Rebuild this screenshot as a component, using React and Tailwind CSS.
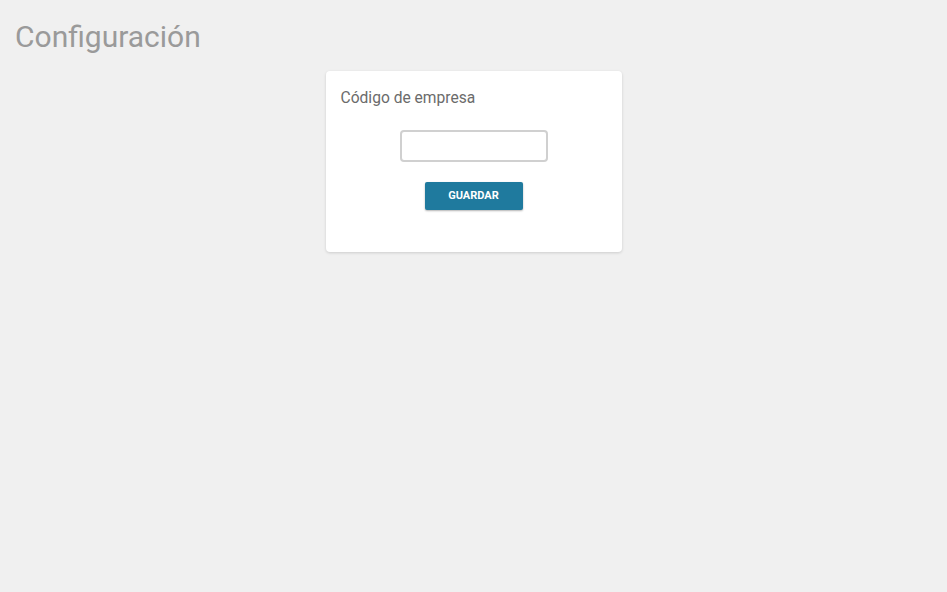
export default function App() {
  return (
    <div className="min-h-screen w-full bg-[#f0f0f0] font-['Roboto',sans-serif]">
      <h1 className="px-[15px] pt-[17px] text-[30px] leading-[40px] text-[#9a9a9a]">Configuración</h1>
      <div className="flex justify-center pt-[14px]">
        <div className="w-[296px] h-[181px] rounded-[4px] bg-white shadow-[0_1px_3px_rgba(0,0,0,0.15)] px-[15px] pt-[16px]">
          <h2 className="text-[15.6px] leading-[22px] text-[#6b6b6b]">Código de empresa</h2>
          <div className="flex flex-col items-center pt-[21px] gap-[20px]">
            <input type="text" className="w-[148px] h-[32px] rounded-[4px] border-2 border-[#d0d0d0] bg-white outline-none px-2" />
            <button className="w-[98px] h-[28px] rounded-[2px] bg-[#1f7a9e] text-white text-[11px] font-bold uppercase shadow-[0_1px_2px_rgba(0,0,0,0.3)]">Guardar</button>
          </div>
        </div>
      </div>
    </div>
  );
}
